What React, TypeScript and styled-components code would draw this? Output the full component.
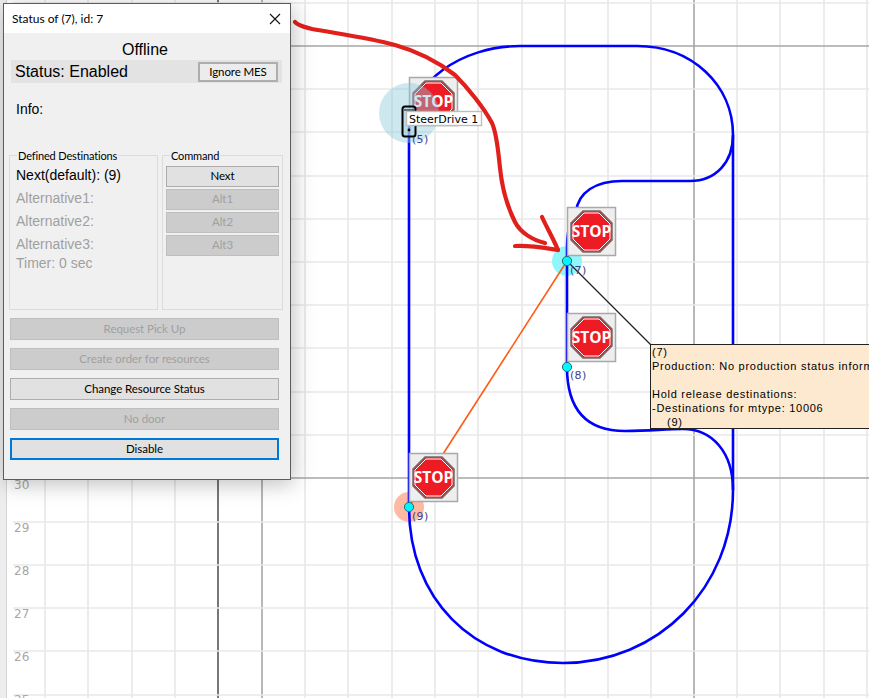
import React from "react";
import styled, { createGlobalStyle } from "styled-components";

const Global = createGlobalStyle`
  html, body { margin: 0; padding: 0; background: #fff; }
  #root { width: 869px; height: 698px; }
`;

const Desktop = styled.div`
  position: relative;
  width: 869px;
  height: 698px;
  overflow: hidden;
  background: #fff;
  font-family: "Liberation Sans", Arial, sans-serif;
`;

const Canvas = styled.svg`
  display: block;
  width: 869px;
  height: 698px;
`;

const AxisLabel = styled.text`
  font: 12px "DejaVu Sans", sans-serif;
  fill: #a8a8a8;
`;

const NodeLabel = styled.text`
  font: 11px "DejaVu Sans", sans-serif;
  letter-spacing: 0.3px;
  fill: #40408a;
`;

const VehicleLabel = styled.text`
  font: 11px "DejaVu Sans", sans-serif;
  fill: #000;
`;

const StopText = styled.text`
  font: 700 15.5px "Open Sans", "Noto Sans", sans-serif;
  fill: #fff;
  text-anchor: middle;
`;

const Window = styled.section`
  position: absolute;
  left: 3px;
  top: 3px;
  width: 286px;
  height: 475px;
  display: flex;
  flex-direction: column;
  background: #f0f0f0;
  border: 1px solid #5c5c5c;
  box-shadow: 2px 4px 20px rgba(0, 0, 0, 0.26);
`;

const TitleBar = styled.header`
  height: 29px;
  flex: none;
  display: flex;
  align-items: center;
  justify-content: space-between;
  padding: 0 6px 0 8px;
  background: #fff;
  color: #000;
  font: 12px Lato, "Noto Sans", sans-serif;
`;

const CloseIcon = styled.svg`
  width: 14px;
  height: 14px;
  margin-right: 2px;
`;

const Body = styled.div`
  flex: 1;
  display: flex;
  flex-direction: column;
  padding: 7px 7px 0 6px;
`;

const StateHeading = styled.div`
  text-align: center;
  font-size: 16px;
  line-height: 20px;
  color: #000;
  margin-right: 3px;
`;

const StatusStrip = styled.div`
  height: 23px;
  margin: 0 1px 0 1px;
  padding: 0 4px;
  display: flex;
  align-items: center;
  justify-content: space-between;
  background: #e3e3e3;
  font-size: 16px;
  color: #000;
`;

const IgnoreButton = styled.button`
  width: 80px;
  height: 20px;
  padding: 0 0 1px;
  background: #ececec;
  border: 2px solid #adadad;
  font: 11.5px Lato, "Noto Sans", sans-serif;
  letter-spacing: -0.1px;
  color: #000;
`;

const InfoLabel = styled.div`
  margin: 18px 0 0 6px;
  height: 54px;
  line-height: 17px;
  font-size: 14px;
  color: #000;
`;

const Groups = styled.div`
  display: flex;
  gap: 4px;
  margin-left: -1px;
  height: 155px;
`;

const GroupBox = styled.fieldset<{ $w: number }>`
  width: ${(p) => p.$w}px;
  box-sizing: border-box;
  margin: 0;
  padding: 0;
  position: relative;
  border: 1px solid #dcdcdc;
  display: flex;
  flex-direction: column;
`;

const Legend = styled.span`
  position: absolute;
  left: 7px;
  top: -7px;
  padding: 0 1px;
  background: #f0f0f0;
  font: 11px/14px Lato, "Noto Sans", sans-serif;
  letter-spacing: -0.15px;
  color: #000;
`;

const DestinationList = styled.div`
  display: flex;
  flex-direction: column;
  padding: 10px 0 0 6px;
`;

const DestRow = styled.div<{ $off?: boolean; $h?: number }>`
  height: ${(p) => p.$h ?? 23}px;
  line-height: 19px;
  font-size: 14px;
  color: ${(p) => (p.$off ? "#a0a0a0" : "#000")};
`;

const CommandStack = styled.div`
  display: flex;
  flex-direction: column;
  gap: 2px;
  padding: 10px 3px 0 3px;
`;

const UiButton = styled.button<{ $off?: boolean; $focus?: boolean; $h?: number }>`
  display: block;
  width: 100%;
  height: ${(p) => p.$h ?? 22}px;
  padding: 0 0 2px;
  box-sizing: border-box;
  background: ${(p) => (p.$off ? "#cccccc" : "#e1e1e1")};
  border: ${(p) => (p.$focus ? "2px solid #0078d7" : p.$off ? "1px solid #bfbfbf" : "1px solid #adadad")};
  font: 11.5px Lato, "Noto Sans", sans-serif;
  letter-spacing: -0.05px;
  color: ${(p) => (p.$off ? "#a0a0a0" : "#000")};
`;

const ActionStack = styled.div`
  display: flex;
  flex-direction: column;
  gap: 8px;
  margin: 8px 4px 0 0;
`;

const Tooltip = styled.aside`
  position: absolute;
  left: 650px;
  top: 344px;
  width: 260px;
  height: 83px;
  padding: 0 0 0 1px;
  background: #fde9cf;
  border: 1px solid #222;
  font: 11px/14px "Liberation Sans", Arial, sans-serif;
  letter-spacing: 0.72px;
  color: #000;
  white-space: pre;
`;

const hLines = [3, 46, 89, 132, 176, 219, 262, 305, 348, 392, 435, 478, 522, 565, 608, 651, 695];
const vLines = [45, 88, 132, 175, 218, 262, 305, 348, 392, 435, 478, 522, 565, 608, 651, 694, 737, 780, 824, 867];
const vColor = (x: number) => (x === 218 ? "#2e2e2e" : x === 262 || x === 694 ? "#a6a6a6" : "#e8e8e8");
const hColor = (y: number) => (y === 46 || y === 478 ? "#a6a6a6" : "#e8e8e8");

function StopSign({ x, y }: { x: number; y: number }) {
  return (
    <g transform={`translate(${x} ${y})`}>
      <rect x="0.5" y="0.5" width="48" height="48" fill="#eeeeee" stroke="#a9a9a9" strokeWidth="1.5" />
      <polygon points="16,4 33,4 45,16 45,33 33,45 16,45 4,33 4,16" fill="#ed1c24" stroke="#6e6e6e" strokeWidth="1.5" />
      <polygon points="17,6 32,6 43,17 43,32 32,43 17,43 6,32 6,17" fill="none" stroke="#ffffff" strokeWidth="1" />
      <StopText x="24.5" y="30">STOP</StopText>
    </g>
  );
}

const tooltipText = `(7)
Production: No production status information
 
Hold release destinations:
-Destinations for mtype: 10006
    (9)`;

export default function App() {
  return (
    <Desktop>
      <Global />
      <Canvas viewBox="0 0 869 698" xmlns="http://www.w3.org/2000/svg">
        <rect x="0" y="0" width="6" height="698" fill="#eeeeee" />
        <line x1="6.5" y1="0" x2="6.5" y2="698" stroke="#d4d4d4" />
        {vLines.map((x) => (
          <line key={x} x1={x} y1="0" x2={x} y2="698" stroke={vColor(x)} strokeWidth={x === 218 ? 1.3 : 1.6} />
        ))}
        {hLines.map((y) => (
          <line key={y} x1="13" y1={y} x2="869" y2={y} stroke={hColor(y)} strokeWidth="1.6" />
        ))}
        {[["30", 489], ["29", 532], ["28", 575], ["27", 618], ["26", 661], ["25", 704]].map(([t, y]) => (
          <AxisLabel key={t as string} x="14" y={y as number}>{t}</AxisLabel>
        ))}

        <circle cx="567" cy="261" r="15" fill="#8ff7fa" />
        <circle cx="409" cy="507" r="15" fill="#ffb9a3" />

        <g fill="none" stroke="#0000ff" strokeWidth="2.6">
          <path d="M409 507 L409 130 C409 82 462 46 520 46 L637 46 C692 46 733 85 733 135 L733 490" />
          <path d="M733 135 C733 162 716 181 690 181 L622 181 C596 181 578 192 576 212 C570 220 567 230 567 250 L567 367 C567 405 582 431 625 431 C650 431 665 429 683 429 C712 429 733 452 733 490" />
          <path d="M409 507 C409 598 472 663 563 663 C658 663 733 588 733 490" />
        </g>
        <line x1="567" y1="261" x2="409" y2="507" stroke="#ff5a14" strokeWidth="1.6" />
        <line x1="567" y1="261" x2="651" y2="345" stroke="#222" strokeWidth="1.2" />

        <StopSign x={409} y={77} />
        <StopSign x={567} y={207} />
        <StopSign x={567} y={313} />
        <StopSign x={409} y={453} />

        <circle cx="409" cy="113" r="30" fill="#8ac8dc" fillOpacity="0.42" />

        <circle cx="567" cy="261" r="4.6" fill="#00f5ff" stroke="#1d6f78" />
        <circle cx="567" cy="367" r="4.6" fill="#00f5ff" stroke="#1d6f78" />
        <circle cx="409" cy="507" r="4.6" fill="#00f5ff" stroke="#1d6f78" />

        <NodeLabel x="412" y="143">(5)</NodeLabel>
        <NodeLabel x="570" y="274">(7)</NodeLabel>
        <NodeLabel x="570" y="379">(8)</NodeLabel>
        <NodeLabel x="412" y="520">(9)</NodeLabel>

        <rect x="402.5" y="106.5" width="13" height="30" rx="2.5" fill="#a9d4e2" fillOpacity="0.6" stroke="#000" strokeWidth="2" />
        <line x1="404" y1="110" x2="414" y2="110" stroke="#000" strokeWidth="1" />
        <circle cx="409" cy="130" r="1.4" fill="#000" />
        <rect x="406.5" y="111.5" width="75" height="14" fill="#ffffff" stroke="#bdbdbd" strokeWidth="1.4" />
        <VehicleLabel x="409" y="123">SteerDrive 1</VehicleLabel>

        <g fill="none" stroke="#e1201c" strokeWidth="4.2" strokeLinecap="round" strokeLinejoin="round">
          <path d="M295 22 C298 26 305 27 312 29 C340 34 370 38 395 45 C420 52 442 65 455 75 C468 88 484 108 492 123 C497 134 498 150 500 168 C502 188 508 208 515 222 C520 232 532 240 545 243" />
          <path d="M515 246 C530 245 545 248 558 250" />
          <path d="M542 217 C547 228 554 240 558 250" />
        </g>
      </Canvas>

      <Window>
        <TitleBar>
          <span>Status of (7), id: 7</span>
          <CloseIcon viewBox="0 0 14 14">
            <path d="M2 2 L12 12 M12 2 L2 12" stroke="#111" strokeWidth="1.1" fill="none" />
          </CloseIcon>
        </TitleBar>
        <Body>
          <StateHeading>Offline</StateHeading>
          <StatusStrip>
            <span>Status: Enabled</span>
            <IgnoreButton>Ignore MES</IgnoreButton>
          </StatusStrip>
          <InfoLabel>Info:</InfoLabel>
          <Groups>
            <GroupBox $w={149}>
              <Legend>Defined Destinations</Legend>
              <DestinationList>
                <DestRow>Next(default): (9)</DestRow>
                <DestRow $off>Alternative1:</DestRow>
                <DestRow $off>Alternative2:</DestRow>
                <DestRow $off $h={19}>Alternative3:</DestRow>
                <DestRow $off>Timer: 0 sec</DestRow>
              </DestinationList>
            </GroupBox>
            <GroupBox $w={121}>
              <Legend>Command</Legend>
              <CommandStack>
                <UiButton $h={21}>Next</UiButton>
                <UiButton $h={21} $off>Alt1</UiButton>
                <UiButton $h={21} $off>Alt2</UiButton>
                <UiButton $h={21} $off>Alt3</UiButton>
              </CommandStack>
            </GroupBox>
          </Groups>
          <ActionStack>
            <UiButton $off>Request Pick Up</UiButton>
            <UiButton $off>Create order for resources</UiButton>
            <UiButton>Change Resource Status</UiButton>
            <UiButton $off>No door</UiButton>
            <UiButton $focus>Disable</UiButton>
          </ActionStack>
        </Body>
      </Window>

      <Tooltip>{tooltipText}</Tooltip>
    </Desktop>
  );
}
